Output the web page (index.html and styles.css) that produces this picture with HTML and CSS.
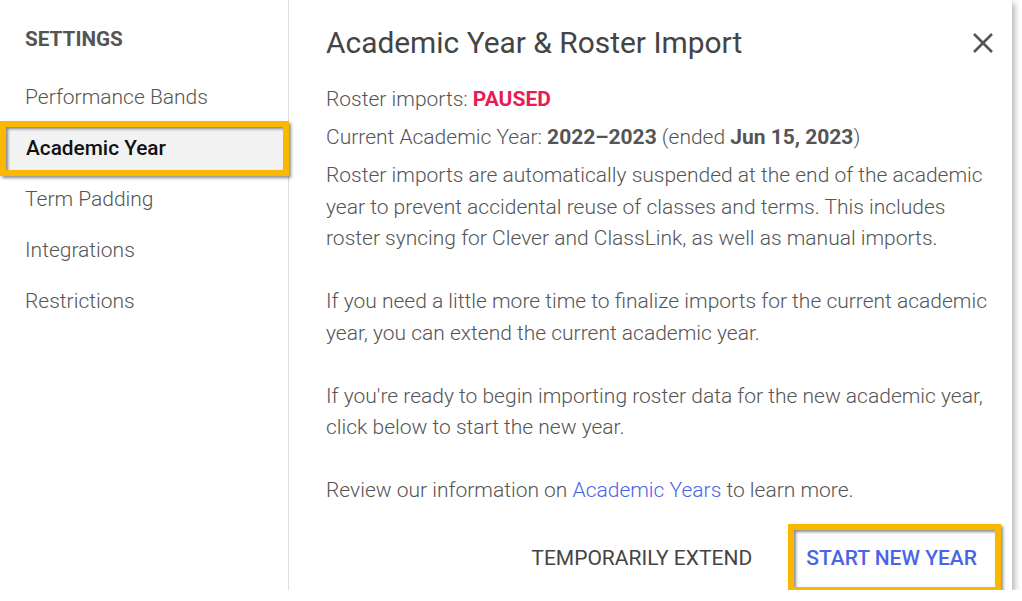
FILE: index.html
```html
<!DOCTYPE html>
<html>
<head>
<meta charset="utf-8">
<link rel="stylesheet" href="styles.css">
</head>
<body>
<div class="dialog">
  <nav class="sidebar">
    <div class="side-title">SETTINGS</div>
    <div class="side-item">Performance Bands</div>
    <div class="side-item active">Academic Year</div>
    <div class="side-item">Term Padding</div>
    <div class="side-item">Integrations</div>
    <div class="side-item">Restrictions</div>
  </nav>
  <main class="main">
    <header class="header">
      <h1 class="title">Academic Year &amp; Roster Import</h1>
      <button class="close" aria-label="Close">
        <svg width="22" height="22" viewBox="0 0 22 22"><path d="M2 2 L20 20 M20 2 L2 20" stroke="#555" stroke-width="2.6" fill="none"/></svg>
      </button>
    </header>
    <p class="line">Roster imports: <span class="paused">PAUSED</span></p>
    <p class="line">Current Academic Year: <b>2022–2023</b> (ended <b>Jun 15, 2023</b>)</p>
    <p class="line para">Roster imports are automatically suspended at the end of the academic year to prevent accidental reuse of classes and terms. This includes roster syncing for Clever and ClassLink, as well as manual imports.</p>
    <p class="para">If you need a little more time to finalize imports for the current academic year, you can extend the current academic year.</p>
    <p class="para">If you're ready to begin importing roster data for the new academic year, click below to start the new year.</p>
    <p class="para">Review our information on <a class="link" href="#">Academic Years</a> to learn more.</p>
    <footer class="footer">
      <button class="btn">TEMPORARILY EXTEND</button>
      <button class="btn primary">START NEW YEAR</button>
    </footer>
  </main>
</div>
</body>
</html>
```
FILE: styles.css
```css
html, body {
  margin: 0;
  padding: 0;
  background: #fff;
}
body {
  font-family: Roboto, "Liberation Sans", Arial, sans-serif;
  color: #555;
}
.dialog {
  width: 1012px;
  height: 590px;
  display: flex;
  background: #fff;
  box-shadow: 3px 3px 6px rgba(0, 0, 0, 0.28);
}
.sidebar {
  width: 288px;
  flex: none;
  border-right: 1px solid #dedede;
  padding-top: 14px;
  box-sizing: content-box;
}
.side-title {
  height: 51px;
  line-height: 51px;
  padding-left: 25px;
  font-size: 20.7px;
  font-weight: 700;
  color: #555;
  margin-bottom: 7px;
}
.side-item {
  height: 51px;
  line-height: 51px;
  padding-left: 25px;
  font-size: 21px;
  font-weight: 300;
  color: #555;
}
.side-item.active {
  position: relative;
  height: 43px;
  line-height: 43px;
  margin: -2px -1px -2px 0;
  padding-left: 20px;
  border: 6px solid #fbb800;
  background: #f2f2f2;
  color: #111;
  font-size: 20.8px;
  font-weight: 500;
  box-shadow: 2px 2px 3px rgba(0, 0, 0, 0.45), inset 2px 2px 3px rgba(0, 0, 0, 0.45);
}
.main {
  flex: 1;
  padding: 0 11px 0 37px;
  display: flex;
  flex-direction: column;
  font-size: 21px;
  font-weight: 300;
  line-height: 31.5px;
}
.header {
  display: flex;
  align-items: center;
  justify-content: space-between;
  padding-top: 20px;
  height: 46px;
  padding-right: 7px;
}
.title {
  margin: 0;
  font-size: 29.9px;
  font-weight: 400;
  color: #444;
  line-height: 46px;
}
.close {
  border: 0;
  background: none;
  padding: 0;
  width: 22px;
  height: 22px;
  cursor: pointer;
}
.close svg {
  display: block;
}
p {
  margin: 0;
}
.line {
  margin-top: 6.5px;
}
.line:first-of-type {
  margin-top: 18px;
}
.para + .para {
  margin-top: 31.5px;
}
.paused {
  color: #ea1b52;
  font-weight: 700;
}
b {
  font-weight: 700;
  color: #555;
}
.link {
  color: #4a64e8;
  text-decoration: none;
}
.footer {
  display: flex;
  justify-content: flex-end;
  align-items: center;
  gap: 24px;
  margin-top: 17px;
  margin-bottom: -3px;
}
.btn {
  font-family: inherit;
  font-size: 21px;
  font-weight: 400;
  line-height: 57px;
  height: 57px;
  padding: 0 12px;
  background: #fff;
  border: 0;
  color: #444;
  cursor: pointer;
  box-sizing: content-box;
}
.btn.primary {
  padding: 0 18px 0 12px;
  border: 6px solid #fbb800;
  color: #4a64e8;
  font-weight: 500;
  box-shadow: 2px 2px 3px rgba(0, 0, 0, 0.45), inset 2px 2px 3px rgba(0, 0, 0, 0.45);
}
```
